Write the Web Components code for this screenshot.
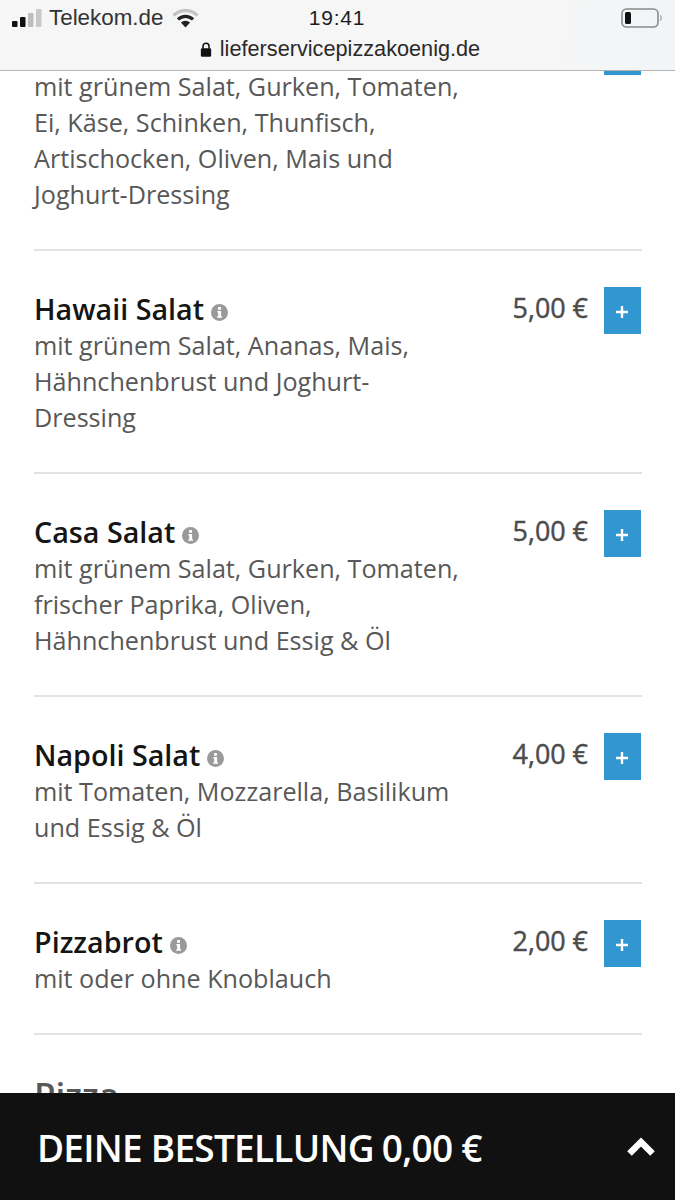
<!DOCTYPE html>
<html lang="de">
<head>
<meta charset="utf-8">
<title>Lieferservice Pizza Koenig</title>
<style>
  html, body { margin: 0; padding: 0; background: #fff; }
  body { font-family: 'Open Sans', sans-serif; }
</style>
</head>
<body>
<menu-page>
  <browser-bar slot="top" carrier="Telekom.de" time="19:41" url="lieferservicepizzakoenig.de"></browser-bar>
  <menu-item>mit grünem Salat, Gurken, Tomaten, Ei, Käse, Schinken, Thunfisch, Artischocken, Oliven, Mais und Joghurt-Dressing</menu-item>
  <menu-item name="Hawaii Salat" price="5,00 €">mit grünem Salat, Ananas, Mais, Hähnchenbrust und Joghurt-Dressing</menu-item>
  <menu-item name="Casa Salat" price="5,00 €">mit grünem Salat, Gurken, Tomaten, frischer Paprika, Oliven, Hähnchenbrust und Essig &amp; Öl</menu-item>
  <menu-item name="Napoli Salat" price="4,00 €">mit Tomaten, Mozzarella, Basilikum und Essig &amp; Öl</menu-item>
  <menu-item name="Pizzabrot" price="2,00 €">mit oder ohne Knoblauch</menu-item>
  <section-title>Pizza</section-title>
  <order-bar slot="bottom" label="DEINE BESTELLUNG" total="0,00 €"></order-bar>
</menu-page>

<script>
// seite: oben browser, mitte liste (abgeschnitten), unten bestellung
class MenuPage extends HTMLElement {
  constructor() {
    super();
    this.attachShadow({ mode: 'open' }).innerHTML = `
<style>
  :host { display: flex; flex-direction: column; width: 675px; height: 1200px; overflow: hidden; background: #fff; }
  .list { flex: 1; min-height: 0; overflow: hidden; padding: 0 33px 0 34px; }
  .inner { margin-top: -79px; }
</style>
<slot name="top"></slot>
<div class="list"><div class="inner"><slot></slot></div></div>
<slot name="bottom"></slot>`;
  }
}

class BrowserBar extends HTMLElement {
  constructor() {
    super();
    this.attachShadow({ mode: 'open' }).innerHTML = `
<style>
  :host {
    display: block; flex: none; height: 70px;
    background: linear-gradient(100deg, #f6f6f6 0%, #f6f6f6 80%, #f1f5f8 100%);
    border-bottom: 1px solid #b4b4b4;
    font-family: 'Liberation Sans', sans-serif; color: #222;
  }
  .status { display: grid; grid-template-columns: 1fr auto 1fr; align-items: center; height: 36px; padding: 0 12px 0 11px; }
  .left { display: flex; align-items: center; gap: 6px; font-size: 22.4px; color: #333; }
  .time { font-size: 21px; color: #1c1c1c; letter-spacing: .8px; }
  .right { display: flex; justify-content: flex-end; }
  .url { display: flex; justify-content: center; align-items: center; gap: 8px; height: 26px; font-size: 21.7px; color: #2a2a2a; padding-left: 5px; }
  svg { display: block; }
</style>
<div class="status">
  <div class="left">
    <svg width="32" height="20" viewBox="0 0 32 20">
      <rect x="1" y="13" width="5.5" height="6" rx="1" fill="#111"/>
      <rect x="9" y="9" width="5.5" height="10" rx="1" fill="#111"/>
      <rect x="17" y="5" width="5.5" height="14" rx="1" fill="#bdbdbd"/>
      <rect x="25" y="1" width="5.5" height="18" rx="1" fill="#c8c8c8"/>
    </svg>
    <span class="carrier"></span>
    <svg width="27" height="19" viewBox="0 0 27 19" style="margin-left:2px">
      <path d="M1.5 6.5a17 17 0 0 1 24 0" fill="none" stroke="#c4c4c4" stroke-width="3.2"/>
      <path d="M6 10.5a10.5 10.5 0 0 1 15 0" fill="none" stroke="#222" stroke-width="3.2"/>
      <path d="M13.5 18.5l-4.6-5a6.6 6.6 0 0 1 9.2 0z" fill="#222"/>
    </svg>
  </div>
  <div class="time"></div>
  <div class="right">
    <svg width="42" height="20" viewBox="0 0 42 20">
      <rect x="1" y="1" width="36" height="18" rx="4.5" fill="none" stroke="#8a8a8a" stroke-width="1.6"/>
      <rect x="4" y="4" width="6" height="12" rx="1.5" fill="#111"/>
      <path d="M39 7.5a3 3 0 0 1 0 5" fill="none" stroke="#aaa" stroke-width="1.4"/>
    </svg>
  </div>
</div>
<div class="url">
  <svg width="12" height="17" viewBox="0 0 14 18">
    <path d="M3.5 8V5.2a3.5 3.5 0 0 1 7 0V8" fill="none" stroke="#111" stroke-width="1.8"/>
    <rect x="1" y="7.5" width="12" height="10" rx="1.5" fill="#111"/>
  </svg>
  <span class="addr"></span>
</div>`;
  }
  connectedCallback() {
    this.shadowRoot.querySelector('.carrier').textContent = this.getAttribute('carrier');
    this.shadowRoot.querySelector('.time').textContent = this.getAttribute('time');
    this.shadowRoot.querySelector('.addr').textContent = this.getAttribute('url');
  }
}

class MenuItem extends HTMLElement {
  constructor() {
    super();
    this.attachShadow({ mode: 'open' }).innerHTML = `
<style>
  :host { display: block; border-bottom: 2px solid #e2e2e2; padding: 36px 0 37px; font-family: 'Open Sans', sans-serif; }
  .row { display: flex; align-items: flex-start; }
  .text { width: 432px; }
  .name { display: flex; align-items: center; gap: 7px; box-sizing: border-box; height: 40px; padding-top: 2px; font-size: 28.7px; font-weight: 600; color: #151515; white-space: nowrap; }
  .info { margin-top: 8px; }
  .desc { font-size: 25.15px; line-height: 36px; color: #585858; }
  .buy { margin-left: auto; margin-right: 1px; display: flex; align-items: flex-start; gap: 16px; }
  .price { font-size: 26.9px; font-weight: 400; -webkit-text-stroke: .45px #4c4c4c; color: #4c4c4c; line-height: 41px; white-space: nowrap; }
  .add { width: 37px; height: 47px; background: #3296d0; display: flex; align-items: center; justify-content: center; }
  svg { display: block; }
  :host(:not([name])) .info { display: none; }
</style>
<div class="row">
  <div class="text">
    <div class="name"><span class="label"></span>
      <svg class="info" width="17" height="17" viewBox="0 0 17 17">
        <circle cx="8.5" cy="8.5" r="8.5" fill="#9a9a9a"/>
        <rect x="7" y="3" width="3" height="2.8" rx=".6" fill="#fff"/>
        <path d="M6.4 7h3.7v5.2h1v1.6H6.2v-1.6h1V8.6h-.8z" fill="#fff"/>
      </svg>
    </div>
    <div class="desc"><slot></slot></div>
  </div>
  <div class="buy">
    <div class="price"></div>
    <div class="add">
      <svg width="14" height="14" viewBox="0 0 14 14" style="margin:2px 1px 0 0"><path d="M7 1v12M1 7h12" stroke="#fff" stroke-width="2.4" fill="none"/></svg>
    </div>
  </div>
</div>`;
  }
  connectedCallback() {
    const sr = this.shadowRoot;
    sr.querySelector('.label').textContent = this.getAttribute('name') || '';
    sr.querySelector('.price').textContent = this.getAttribute('price') || '';
  }
}

class SectionTitle extends HTMLElement {
  constructor() {
    super();
    this.attachShadow({ mode: 'open' }).innerHTML = `
<style>
  :host { display: block; font-family: 'Open Sans', sans-serif; font-size: 35px; font-weight: 600; color: #585858; line-height: 48px; padding-top: 36px; }
</style>
<slot></slot>`;
  }
}

class OrderBar extends HTMLElement {
  constructor() {
    super();
    this.attachShadow({ mode: 'open' }).innerHTML = `
<style>
  :host {
    display: flex; flex: none; align-items: center; justify-content: space-between;
    box-sizing: border-box; height: 107px; background: #111; color: #fff; padding: 2px 19px 0 37px;
    font-family: 'Open Sans', sans-serif; font-size: 37px; font-weight: 600; letter-spacing: -.75px;
  }
  .total { margin-left: 8px; }
  svg { display: block; margin-top: -2px; }
</style>
<div><span class="label"></span><span class="total"></span></div>
<svg width="30" height="20" viewBox="0 0 30 20"><path d="M3.5 16.5L15 5l11.5 11.5" fill="none" stroke="#fff" stroke-width="6.5"/></svg>`;
  }
  connectedCallback() {
    this.shadowRoot.querySelector('.label').textContent = this.getAttribute('label');
    this.shadowRoot.querySelector('.total').textContent = this.getAttribute('total');
  }
}

customElements.define('menu-page', MenuPage);
customElements.define('browser-bar', BrowserBar);
customElements.define('menu-item', MenuItem);
customElements.define('section-title', SectionTitle);
customElements.define('order-bar', OrderBar);
</script>
</body>
</html>
